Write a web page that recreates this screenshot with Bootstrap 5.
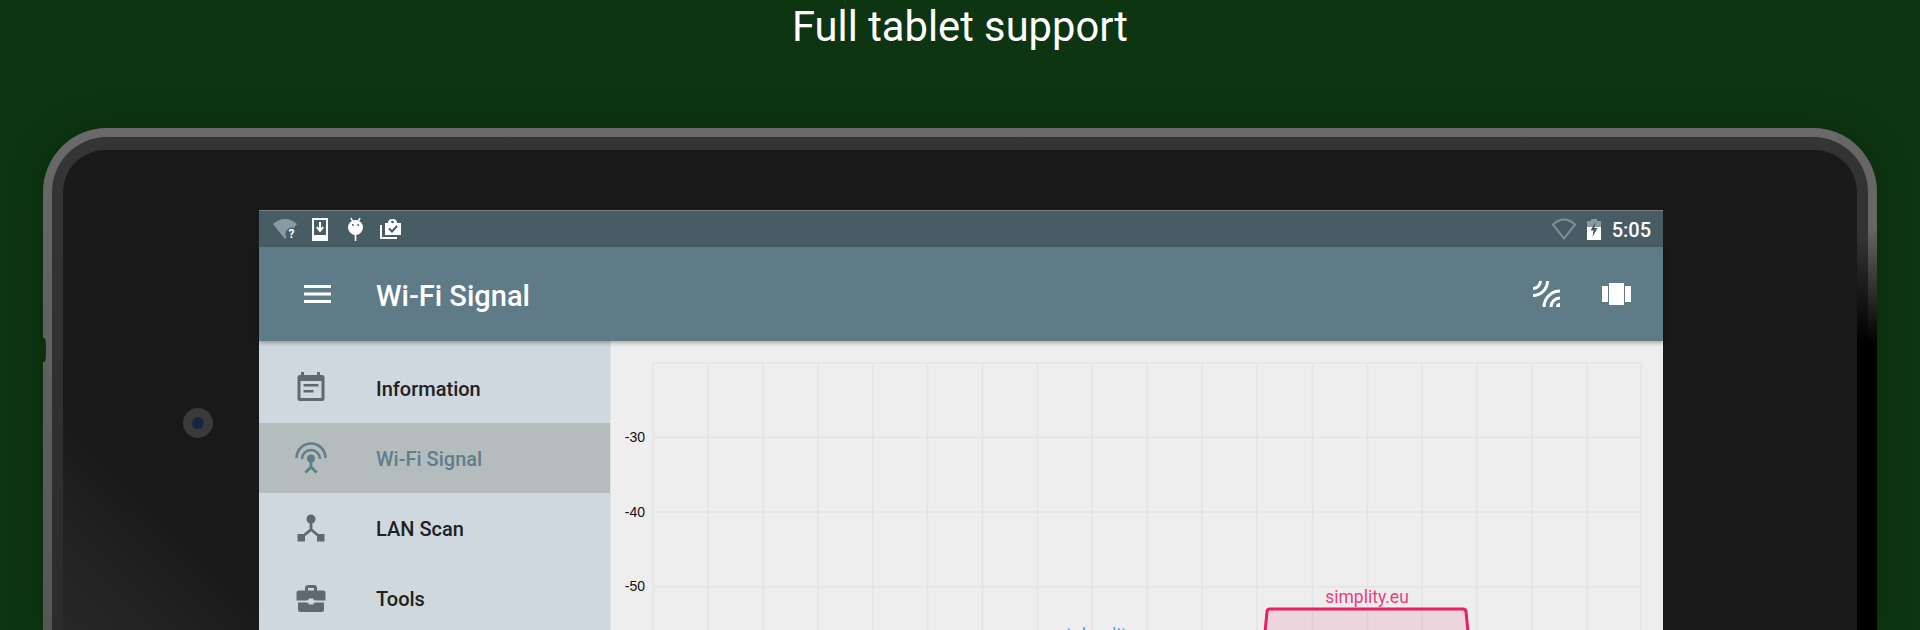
<!DOCTYPE html>
<html lang="en">
<head>
  <meta charset="UTF-8" />
  <meta name="viewport" content="width=device-width, initial-scale=1" />
  <title>Full tablet support</title>
  <link href="https://cdn.jsdelivr.net/npm/bootstrap@5.3.0/dist/css/bootstrap.min.css" rel="stylesheet">
  <style>
    body {
      height: 630px;
      background: #0d3511;
      font-family: Roboto, "Liberation Sans", sans-serif;
    }
    .page-title {
      height: 128px;
      margin: 0;
      padding-top: 6px;
      font-size: 41.700px;
      line-height: 42px;
      font-weight: 400;
      color: #fff;
    }
    /* tablet frame: three nested rounded layers */
    .tablet-edge {
      margin: 0 43px;
      padding: 9px 9px 0;
      border-radius: 64px 64px 0 0;
      background:
        linear-gradient(180deg, #666 0, #666 100px, #000 215px) right top / 40px 100% no-repeat,
        linear-gradient(180deg, #6a6a6a 0, #666 60px, #565656 100%);
      box-shadow: 0 0 40px rgba(0, 0, 0, .22);
      position: relative;
    }
    .tablet-notch {
      position: absolute;
      left: 0;
      top: 210px;
      width: 2.500px;
      height: 24px;
      border-radius: 0 50% 50% 0;
      background: #0c2f10;
    }
    .tablet-band {
      padding: 13px 11px 0;
      border-radius: 55px 55px 0 0;
      background:
        linear-gradient(180deg, #333 0, #333 100px, #000 205px) right top / 40px 100% no-repeat,
        linear-gradient(180deg, #353535 0, #2c2c2c 100%);
    }
    .tablet-bezel {
      padding: 60px 0 0 196px;
      border-radius: 42px 42px 0 0;
      background: linear-gradient(45deg, #272727 0, #222 70px, #191919 160px);
      position: relative;
    }
    .tablet-camera {
      position: absolute;
      left: 120px;
      top: 258px;
      width: 30px;
      height: 30px;
      border-radius: 50%;
      background: #3a3a3a;
    }
    .tablet-camera::after {
      content: "";
      position: absolute;
      left: 9px;
      top: 9px;
      width: 12px;
      height: 12px;
      border-radius: 50%;
      background: #1a2342;
    }
    .screen { width: 1404px; }
    .status-strip {
      height: 37px;
      padding: 0 12px 0 14px;
      background: #485c65;
      border-top: 1px solid #7d7d7d;
    }
    .status-strip svg { overflow: visible; }
    .status-time { font-size: 20px; font-weight: 500; color: #fff; line-height: 1; margin-left: 11px; padding-top: 2px; }
    .gap-a { margin-left: 15px; }
    .gap-b { margin-left: 20px; }
    .gap-c { margin-left: 17px; }
    .gap-d { margin-left: 11px; }
    .app-strip {
      height: 94px;
      padding: 0 32px 0 45px;
      background: #607b88;
      box-shadow: 0 2px 4px rgba(0, 0, 0, .3);
      position: relative;
      z-index: 1;
      flex-wrap: nowrap;
    }
    .app-title { margin-left: 45px; font-size: 29px; font-weight: 500; color: #fff; line-height: 1; padding-top: 4px; }
    .app-carousel { margin-left: 42px; }
    .main-area { height: 289px; }
    .drawer {
      width: 352px;
      padding-top: 12px;
      background: #cfd8de;
      border-right: 1px solid #dfe3e5;
    }
    .drawer .drawer-row {
      height: 70px;
      margin-top: 0;
      padding: 0 0 0 35px;
      border: 0;
      border-radius: 0;
      background: transparent;
      font-size: 20px;
      font-weight: 500;
      color: #212121;
      gap: 48px;
    }
    .drawer .drawer-row span { padding-top: 2px; }
    .drawer .drawer-row.is-current { background: #b4bcbe; color: #607d8b; }
    .plot-area { background: #eee; }
    .plot-area svg { display: block; }
  </style>
</head>
<body class="d-flex flex-column overflow-hidden">

  <h1 class="page-title text-center">Full tablet support</h1>

  <!-- tablet -->
  <div class="tablet-edge flex-grow-1 d-flex flex-column">
    <div class="tablet-notch"></div>
    <div class="tablet-band flex-grow-1 d-flex flex-column">
      <div class="tablet-bezel flex-grow-1">
        <div class="tablet-camera"></div>

        <div class="screen">
          <!-- status bar -->
          <div class="status-strip d-flex align-items-center">
            <svg width="24" height="20" viewBox="0 0 24 20">
              <path d="M0 5Q12-5 24 5L12 20Z" fill="#8a9aa1"/>
              <circle cx="19" cy="15" r="6.500" fill="#485c65"/>
              <text x="15.500" y="19" font-family="Roboto" font-size="12" font-weight="700" fill="#fff">?</text>
            </svg>
            <svg class="gap-a" width="16" height="23" viewBox="0 0 16 23">
              <path d="M1 1H15V22H1Z" fill="none" stroke="#fff" stroke-width="2"/>
              <path d="M1 17H15V22H1Z" fill="#fff"/>
              <path d="M8 4V12M4.800 9L8 13L11.200 9" fill="none" stroke="#fff" stroke-width="2"/>
            </svg>
            <svg class="gap-b" width="15" height="23" viewBox="0 0 15 23">
              <ellipse cx="7.500" cy="9.500" rx="7.500" ry="7.500" fill="#fff"/>
              <path d="M3 0L5 4M12 0L10 4M7.500 16V23" fill="none" stroke="#fff" stroke-width="1.600"/>
              <circle cx="4.800" cy="7" r="1" fill="#485c65"/>
              <circle cx="10.200" cy="7" r="1" fill="#485c65"/>
            </svg>
            <svg class="gap-c" width="21" height="20" viewBox="0 0 21 20">
              <path d="M5 4H8Q8 0 12.500 0T17 4H21V16H5Z" fill="#fff"/>
              <circle cx="12.500" cy="3" r="1.300" fill="#485c65"/>
              <path d="M9 9.500L12 12.500L17 7" fill="none" stroke="#485c65" stroke-width="2"/>
              <path d="M1 6V19H17" fill="none" stroke="#fff" stroke-width="2"/>
            </svg>

            <svg class="ms-auto" width="24" height="21" viewBox="0 0 24 21">
              <path d="M1 5.500Q12-4.500 23 5.500L12 19.500Z" fill="none" stroke="#7f9199" stroke-width="2"/>
            </svg>
            <svg class="gap-d" width="14" height="21" viewBox="0 0 14 21">
              <path d="M4 0H10V2H14V21H0V2H4Z" fill="#8a9aa1"/>
              <path d="M0 8H14V21H0Z" fill="#fff"/>
              <path d="M8.500 3L3.500 11.500H6.500L5.500 18L10.500 9H7.500Z" fill="#485c65"/>
            </svg>
            <span class="status-time">5:05</span>
          </div>

          <!-- app bar -->
          <nav class="navbar app-strip">
            <svg width="27" height="18" viewBox="0 0 27 18">
              <path d="M0 0H27V3H0ZM0 7.500H27V10.500H0ZM0 15H27V18H0Z" fill="#fff"/>
            </svg>
            <span class="app-title">Wi-Fi Signal</span>
            <svg class="ms-auto" width="27" height="26" viewBox="0 0 27 26">
              <path d="M0 14.500A14.500 14.500 0 0 0 14.500 0M0 7.500A7.500 7.500 0 0 0 7.500 0M11 26A16 16 0 0 1 27 10M18 26A9 9 0 0 1 27 17" fill="none" stroke="#fff" stroke-width="3"/>
              <path d="M27 22A4 4 0 0 0 23 26H27Z" fill="#fff"/>
            </svg>
            <svg class="app-carousel" width="29" height="22" viewBox="0 0 29 22">
              <path d="M0 3H6V19H0ZM7 0H22V22H7ZM23 3H29V19H23Z" fill="#fff"/>
            </svg>
          </nav>

          <div class="main-area d-flex">
            <!-- drawer -->
            <div class="drawer list-group list-group-flush">
              <div class="list-group-item drawer-row d-flex align-items-center flex-shrink-0">
                <svg width="34" height="34" viewBox="0 0 34 34">
                  <path d="M7 1H10V4H23V1H26V4H28Q30.500 4 30.500 6.500V27.500Q30.500 30 28 30H6Q3.500 30 3.500 27.500V6.500Q3.500 4 6 4H7ZM6.500 10V27H27.500V10Z" fill="#5f6a70"/>
                  <path d="M9.500 13H24.500V15.500H9.500ZM9.500 19H19.500V21.500H9.500Z" fill="#5f6a70"/>
                </svg>
                <span>Information</span>
              </div>
              <div class="list-group-item drawer-row is-current d-flex align-items-center flex-shrink-0">
                <svg width="34" height="34" viewBox="0 0 34 34">
                  <path d="M2.500 17A14.500 14.500 0 0 1 31.500 17M8 18A9 9 0 0 1 26 18" fill="none" stroke="#607d8b" stroke-width="2.500"/>
                  <circle cx="17" cy="17.500" r="4" fill="#607d8b"/>
                  <path d="M17 18V26M11.500 31.500L17 26L22.500 31.500" fill="none" stroke="#607d8b" stroke-width="2.800"/>
                </svg>
                <span>Wi-Fi Signal</span>
              </div>
              <div class="list-group-item drawer-row d-flex align-items-center flex-shrink-0">
                <svg width="34" height="34" viewBox="0 0 34 34">
                  <circle cx="17" cy="8" r="4.500" fill="#5f6a70"/>
                  <path d="M17 10V18.500L8 26M17 18.500L26 26" fill="none" stroke="#5f6a70" stroke-width="2.800"/>
                  <path d="M3.500 23H11V30.500H3.500ZM23 23H30.500V30.500H23Z" fill="#5f6a70"/>
                </svg>
                <span>LAN Scan</span>
              </div>
              <div class="list-group-item drawer-row d-flex align-items-center flex-shrink-0">
                <svg width="34" height="34" viewBox="0 0 34 34">
                  <path d="M11 10V7Q11 4 14 4H20Q23 4 23 7V10H20V7H14V10Z" fill="#5f6a70"/>
                  <path d="M5 9.500H29Q31.500 9.500 31.500 12V19.500H2.500V12Q2.500 9.500 5 9.500ZM4 21.500H30V28.500Q30 31 27.500 31H6.500Q4 31 4 28.500Z" fill="#5f6a70"/>
                  <path d="M14.500 17.500H19.500V19.500H21.500V21.500H19.500V23.500H14.500V21.500H12.500V19.500H14.500Z" fill="#cfd8de"/>
                </svg>
                <span>Tools</span>
              </div>
            </div>

            <!-- signal chart -->
            <div class="plot-area flex-grow-1">
              <svg width="1052" height="289" viewBox="611 341 1052 289">
                <path d="M653 363H1641M653 437.500H1641M653 512H1641M653 586.700H1641" stroke="#e3e3e3" stroke-width="1.500" fill="none"/>
                <path d="M653 363V630M708 363V630M763 363V630M818 363V630M873 363V630M927.500 363V630M982.500 363V630M1037.500 363V630M1092 363V630M1147 363V630M1202 363V630M1257 363V630M1312.500 363V630M1367.500 363V630M1422 363V630M1477 363V630M1532 363V630M1587 363V630M1641 363V630" stroke="#e3e3e3" stroke-width="1.500" fill="none"/>
                <g font-family="Liberation Sans" font-size="14" fill="#111" text-anchor="end">
                  <text x="645" y="441.500">-30</text>
                  <text x="645" y="516.500">-40</text>
                  <text x="645" y="590.500">-50</text>
                </g>
                <path d="M1265 632L1267 612Q1267 609 1270 609H1463Q1466 609 1466 612L1468 632" fill="#e91e63" fill-opacity=".12" stroke="#e91e63" stroke-width="3"/>
                <text x="1367" y="603" font-family="Roboto" font-size="17.500" fill="#ec407a" text-anchor="middle">simplity.eu</text>
                <text y="641" font-family="Roboto" font-size="18" fill="#42a5f5"><tspan x="1066">talan</tspan><tspan x="1112">lit</tspan></text>
              </svg>
            </div>
          </div>
        </div>
      </div>
    </div>
  </div>

  <script src="https://cdn.jsdelivr.net/npm/bootstrap@5.3.0/dist/js/bootstrap.bundle.min.js"></script>
</body>
</html>
